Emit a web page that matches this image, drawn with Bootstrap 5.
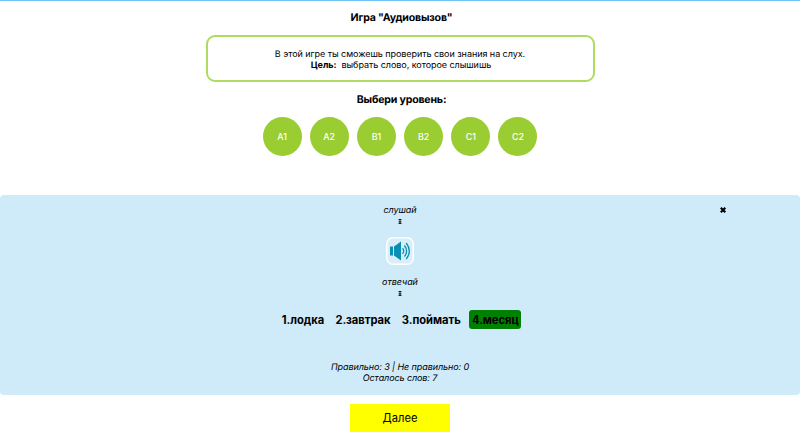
<!DOCTYPE html>
<html lang="ru">
<head>
<meta charset="utf-8">
<meta name="viewport" content="width=device-width, initial-scale=1">
<title>Аудиовызов</title>
<link href="https://cdn.jsdelivr.net/npm/bootstrap@5.3.0/dist/css/bootstrap.min.css" rel="stylesheet">
<style>
body{font-family:Inter,sans-serif;font-size:9px;letter-spacing:-.05px;line-height:11px;color:#000;background:#fff;overflow:hidden;text-rendering:geometricPrecision}
.page{height:440px;border-top:1px solid #6fc4f5}
.heading{font-size:10.6px;letter-spacing:-.2px;line-height:14px;font-weight:700;padding-left:3px}
.title{margin-top:10px}
.rules{width:389px;height:47px;margin-top:10px;padding-top:2px;border:2px solid #b0db62;border-radius:9px}
.goal{padding-left:2px}
.pick{margin-top:11px}
.levels{gap:8.2px;margin-top:10px}
.level{width:39px;height:39px;background:#9acd32;color:#fff;font-size:8.9px;font-weight:500;line-height:1}
.game{height:200px;margin-top:39px;background:#cfeaf8;border-radius:4px}
.hint{font-style:italic}
.listen-hint{margin-top:10px}
.arrow{height:11px}
.listen{margin-top:10px;margin-bottom:12px;width:28px;height:28px}
.listen svg{display:block}
.answers{margin-top:11px;gap:5.3px}
.answer{font-size:11.2px;letter-spacing:-.05px;line-height:19px;height:19px;padding:1px 3px 0;font-weight:700;color:#000;border-radius:3px}
.right{background:#008000;padding-right:2.5px}
.score{margin-top:33px;letter-spacing:-.09px}
.close-game{position:absolute;left:719px;top:11px;width:8px;height:8px}
.next{width:100px;height:28px;margin-top:9px;padding-top:1px;background:#ff0;font-size:11.2px;color:#000;line-height:1}
</style>
</head>
<body>
<main class="page d-flex flex-column align-items-center">
  <h1 class="heading title mb-0">Игра "Аудиовызов"</h1>
  <div class="rules d-flex flex-column justify-content-center text-center">
    <div>В этой игре ты сможешь проверить свои знания на слух.</div>
    <div class="goal"><b>Цель:</b>&nbsp; выбрать слово, которое слышишь</div>
  </div>
  <h2 class="heading pick mb-0">Выбери уровень:</h2>
  <div class="levels d-flex">
    <button class="level rounded-circle border-0 px-0 pb-0">A1</button>
    <button class="level rounded-circle border-0 px-0 pb-0">A2</button>
    <button class="level rounded-circle border-0 px-0 pb-0">B1</button>
    <button class="level rounded-circle border-0 px-0 pb-0">B2</button>
    <button class="level rounded-circle border-0 px-0 pb-0">C1</button>
    <button class="level rounded-circle border-0 px-0 pb-0">C2</button>
  </div>
  <section class="game w-100 position-relative d-flex flex-column align-items-center">
    <button class="close-game bg-transparent border-0 p-0 d-flex" aria-label="Закрыть"><svg width="8" height="8" viewBox="0 0 8 8"><path d="M1.8 1.7 6.3 6.3M6.3 1.7 1.8 6.3" stroke="#000" stroke-width="2.1"/></svg></button>
    <div class="hint listen-hint">слушай</div>
    <svg class="arrow" width="6" height="11" viewBox="0 0 6 11"><path d="M1.5 3.5H4.5M3 3.5V6.5M1.5 7.5H4.5" stroke="#222" fill="none"/><path d="M1.2 5.2H4.8L3 7.2Z" fill="#222"/></svg>
    <button class="listen bg-transparent border-0 p-0" aria-label="Слушать">
      <svg width="28" height="28" viewBox="0 0 28 28"><rect x=".8" y=".8" width="26.4" height="26.4" rx="6" fill="#d9eef9" stroke="#fff" stroke-width="1.4"/><path d="M4 9.5H7V18.5H4ZM8 9.5 15 4.5V23.5L8 18.5Z" fill="#098fb5"/><path d="M16.5 11.2Q18.9 14 16.5 16.8M18.4 8.5Q22.8 14 18.4 19.5M20.2 6Q26.4 14 20.2 22" fill="none" stroke="#098fb5" stroke-width="1.3"/></svg>
    </button>
    <div class="hint">отвечай</div>
    <svg class="arrow" width="6" height="11" viewBox="0 0 6 11"><path d="M1.5 3.5H4.5M3 3.5V6.5M1.5 7.5H4.5" stroke="#222" fill="none"/><path d="M1.2 5.2H4.8L3 7.2Z" fill="#222"/></svg>
    <div class="answers d-flex">
      <button class="answer bg-transparent border-0">1.лодка</button>
      <button class="answer bg-transparent border-0">2.завтрак</button>
      <button class="answer bg-transparent border-0">3.поймать</button>
      <button class="answer right border-0">4.месяц</button>
    </div>
    <div class="score hint text-center">Правильно: 3 | Не правильно: 0<br>Осталось слов: 7</div>
  </section>
  <button class="next border-0 px-0 pb-0">Далее</button>
</main>
<script src="https://cdn.jsdelivr.net/npm/bootstrap@5.3.0/dist/js/bootstrap.bundle.min.js"></script>
</body>
</html>
